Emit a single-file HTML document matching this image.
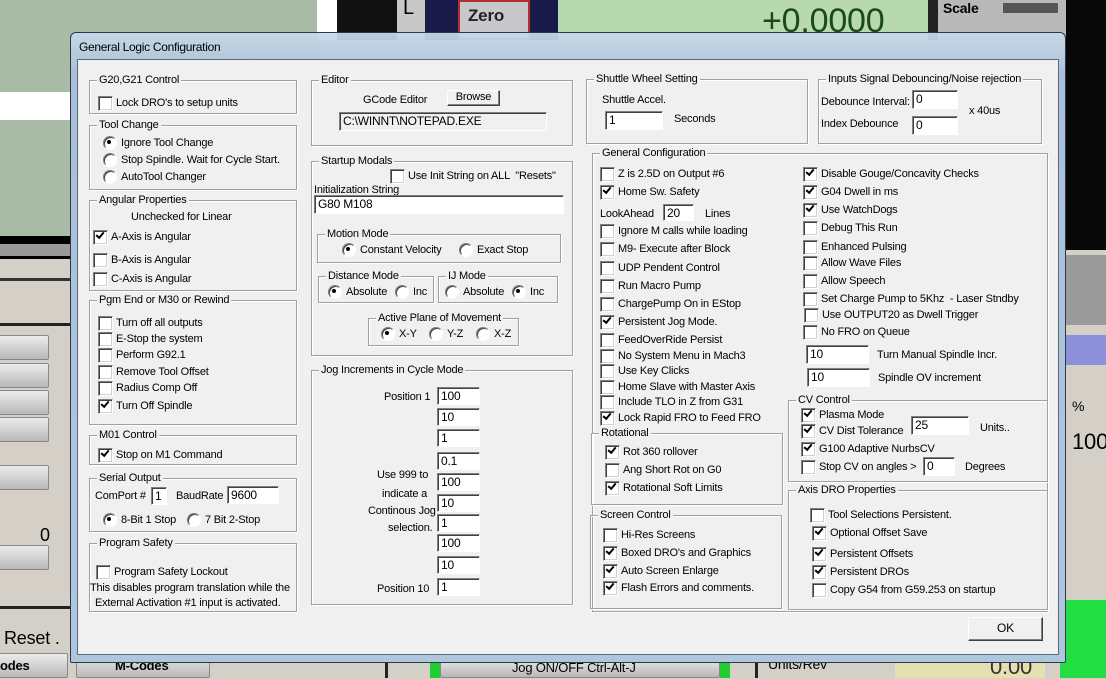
<!DOCTYPE html>
<html><head><meta charset="utf-8"><style>
*{margin:0;padding:0;box-sizing:border-box}
body{width:1106px;height:678px;overflow:hidden;position:relative;background:#d4d0c8;font-family:"Liberation Sans",sans-serif;font-size:11px;color:#000;letter-spacing:-0.2px}
.a{position:absolute}
.t{position:absolute;white-space:nowrap;line-height:14px;margin-top:1px}
.g{position:absolute;border:1px solid #a0a0a0;box-shadow:1px 1px 0 #fff,inset 1px 1px 0 #fff}
.g>span{position:absolute;top:-8px;left:7px;background:#f0f0f0;padding:0 2px;line-height:14px;white-space:nowrap}
.c,.r{position:absolute;padding-left:18px;height:14px;line-height:14px;white-space:nowrap;margin-top:1px}
.c::before{content:"";position:absolute;left:0;top:0;width:13px;height:13px;border:1px solid;border-color:#808080 #fff #fff #808080;box-shadow:inset 1px 1px 0 #404040,inset -1px -1px 0 #d4d0c8;background:#fff}
.c.k::after{content:"";position:absolute;left:3px;top:2px;width:6px;height:3px;border-left:2px solid #000;border-bottom:2px solid #000;transform:rotate(-50deg)}
.r::before{content:"";position:absolute;left:0;top:0;width:12px;height:12px;border-radius:50%;border:1px solid;border-color:#808080 #fff #fff #808080;box-shadow:inset 1px 1px 0 #404040;background:#fff}
.r.k::after{content:"";position:absolute;left:4px;top:4px;width:4px;height:4px;border-radius:50%;background:#000}
.in{position:absolute;background:#fff;border:1px solid;border-color:#808080 #fff #fff #808080;box-shadow:inset 1px 1px 0 #404040;padding:2px 0 0 3px;line-height:13px;white-space:nowrap;font-size:12px}
.btn{position:absolute;background:#f0f0f0;border:1px solid;border-color:#fff #404040 #404040 #fff;box-shadow:inset -1px -1px 0 #808080;text-align:center;white-space:nowrap}
.bb{position:absolute;background:linear-gradient(#ececec,#b8b8b8);border:1px solid #888;border-radius:2px}
</style></head><body>
<div class="a" style="left:0;top:0;width:320px;height:236px;background:#a9bba6"></div>
<div class="a" style="left:0;top:92px;width:72px;height:28px;background:#fff"></div>
<div class="a" style="left:317px;top:0;width:20px;height:40px;background:#fff"></div>
<div class="a" style="left:337px;top:0;width:60px;height:40px;background:#111"></div>
<div class="a" style="left:397px;top:0;width:28px;height:40px;background:#c8c8c8"></div>
<div class="t" style="left:403px;top:0;font-size:20px">L</div>
<div class="a" style="left:425px;top:0;width:35px;height:40px;background:#1a1a4a"></div>
<div class="a" style="left:458px;top:0;width:72px;height:40px;background:#c8c8cc;border:2px solid #b03030"></div>
<div class="t" style="left:468px;top:8px;font-size:17px;font-weight:bold;color:#222">Zero</div>
<div class="a" style="left:530px;top:0;width:28px;height:40px;background:#1a1a4a"></div>
<div class="a" style="left:558px;top:0;width:370px;height:40px;background:#b8d8b0"></div>
<div class="t" style="left:762px;top:2px;font-size:34px;color:#1a4a1a;line-height:36px">+0.0000</div>
<div class="a" style="left:928px;top:0;width:10px;height:40px;background:#222"></div>
<div class="a" style="left:938px;top:0;width:130px;height:40px;background:#b8b8b8"></div>
<div class="t" style="left:943px;top:0;font-size:14px;font-weight:bold">Scale</div>
<div class="a" style="left:1003px;top:3px;width:55px;height:10px;background:#555"></div>
<div class="a" style="left:1066px;top:0;width:40px;height:250px;background:#080808"></div>
<div class="a" style="left:1066px;top:255px;width:40px;height:70px;background:#9a9a9a"></div>
<div class="a" style="left:1066px;top:335px;width:40px;height:30px;background:#8c90d8"></div>
<div class="t" style="left:1072px;top:398px;font-size:14px">%</div>
<div class="t" style="left:1072px;top:428px;font-size:22px;line-height:26px">100</div>
<div class="a" style="left:1060px;top:600px;width:46px;height:78px;background:#22dd44"></div>
<div class="a" style="left:0;top:236px;width:72px;height:8px;background:#000"></div>
<div class="a" style="left:0;top:244px;width:72px;height:12px;background:#999"></div>
<div class="a" style="left:0;top:256px;width:72px;height:3px;background:#000"></div>
<div class="a" style="left:0;top:278px;width:72px;height:3px;background:#333"></div>
<div class="a" style="left:0;top:323px;width:72px;height:3px;background:#222"></div>
<div class="bb" style="left:-4px;top:335px;width:53px;height:25px"></div>
<div class="bb" style="left:-4px;top:363px;width:53px;height:25px"></div>
<div class="bb" style="left:-4px;top:390px;width:53px;height:25px"></div>
<div class="bb" style="left:-4px;top:417px;width:53px;height:25px"></div>
<div class="bb" style="left:-4px;top:465px;width:53px;height:25px"></div>
<div class="t" style="left:40px;top:523px;font-size:18px;line-height:22px">0</div>
<div class="bb" style="left:-4px;top:545px;width:53px;height:25px"></div>
<div class="a" style="left:0;top:606px;width:72px;height:3px;background:#222"></div>
<div class="t" style="left:4px;top:626px;font-size:18px;line-height:22px">Reset .</div>
<div class="bb" style="left:-4px;top:653px;width:72px;height:25px"></div>
<div class="t" style="left:0;top:658px;font-size:13px;font-weight:bold">odes</div>
<div class="bb" style="left:76px;top:653px;width:134px;height:25px"></div>
<div class="t" style="left:115px;top:658px;font-size:13px;font-weight:bold">M-Codes</div>
<div class="a" style="left:385px;top:660px;width:3px;height:18px;background:#222"></div>
<div class="a" style="left:430px;top:660px;width:10px;height:18px;background:#22cc33"></div>
<div class="bb" style="left:440px;top:656px;width:280px;height:22px"></div>
<div class="t" style="left:512px;top:660px;font-size:13px">Jog ON/OFF Ctrl-Alt-J</div>
<div class="a" style="left:720px;top:660px;width:10px;height:18px;background:#22cc33"></div>
<div class="a" style="left:755px;top:660px;width:3px;height:18px;background:#222"></div>
<div class="t" style="left:768px;top:656px;font-size:14px">Units/Rev</div>
<div class="a" style="left:895px;top:662px;width:150px;height:16px;background:#e6e0b0"></div>
<div class="t" style="left:990px;top:654px;font-size:22px;line-height:24px;color:#333">0.00</div>

<div class="a" style="left:70px;top:32px;width:996px;height:631px;border:1px solid #2a3a4a;border-radius:6px 6px 2px 2px;background:linear-gradient(180deg,rgba(200,218,234,.93),rgba(176,200,222,.93) 30px,#a8c0d8 40px,#b0c6dc);"></div>
<div class="t" style="left:79px;top:39px;font-size:12px;letter-spacing:-0.3px">General Logic Configuration</div>
<div class="a" style="left:77px;top:59px;width:982px;height:596px;background:#f0f0f0;border:1px solid #5a6a7a"></div>

<div class="g" style="left:89px;top:80px;width:208px;height:34px"><span>G20,G21 Control</span></div>
<div class="c" style="left:98px;top:95px">Lock DRO's to setup units</div>

<div class="g" style="left:89px;top:125px;width:208px;height:65px"><span>Tool Change</span></div>
<div class="r k" style="left:103px;top:135px">Ignore Tool Change</div>
<div class="r" style="left:103px;top:152px">Stop Spindle. Wait for Cycle Start.</div>
<div class="r" style="left:103px;top:169px">AutoTool Changer</div>

<div class="g" style="left:89px;top:200px;width:208px;height:91px"><span>Angular Properties</span></div>
<div class="t" style="left:131px;top:209px">Unchecked for Linear</div>
<div class="c k" style="left:93px;top:229px">A-Axis is Angular</div>
<div class="c" style="left:93px;top:252px">B-Axis is Angular</div>
<div class="c" style="left:93px;top:271px">C-Axis is Angular</div>

<div class="g" style="left:89px;top:300px;width:208px;height:125px"><span>Pgm End or M30 or Rewind</span></div>
<div class="c" style="left:98px;top:315px">Turn off all outputs</div>
<div class="c" style="left:98px;top:331px">E-Stop the system</div>
<div class="c" style="left:98px;top:347px">Perform G92.1</div>
<div class="c" style="left:98px;top:364px">Remove Tool Offset</div>
<div class="c" style="left:98px;top:380px">Radius Comp Off</div>
<div class="c k" style="left:98px;top:398px">Turn Off Spindle</div>

<div class="g" style="left:89px;top:435px;width:208px;height:30px"><span>M01 Control</span></div>
<div class="c k" style="left:98px;top:447px">Stop on M1 Command</div>

<div class="g" style="left:89px;top:478px;width:208px;height:54px"><span>Serial Output</span></div>
<div class="t" style="left:95px;top:488px">ComPort #</div>
<div class="in" style="left:151px;top:487px;width:16px;height:18px">1</div>
<div class="t" style="left:176px;top:488px">BaudRate</div>
<div class="in" style="left:227px;top:486px;width:52px;height:18px">9600</div>
<div class="r k" style="left:103px;top:512px">8-Bit 1 Stop</div>
<div class="r" style="left:187px;top:512px">7 Bit 2-Stop</div>

<div class="g" style="left:89px;top:543px;width:208px;height:69px"><span>Program Safety</span></div>
<div class="c" style="left:96px;top:564px">Program Safety Lockout</div>
<div class="t" style="left:90px;top:580px">This disables program translation while the</div>
<div class="t" style="left:95px;top:595px">External Activation #1 input is activated.</div>

<div class="g" style="left:311px;top:80px;width:262px;height:66px"><span>Editor</span></div>
<div class="t" style="left:363px;top:92px">GCode Editor</div>
<div class="btn" style="left:447px;top:90px;width:53px;height:16px;line-height:13px">Browse</div>
<div class="in" style="left:339px;top:112px;width:208px;height:19px;background:#f0f0f0">C:\WINNT\NOTEPAD.EXE</div>

<div class="g" style="left:311px;top:161px;width:262px;height:195px"><span>Startup Modals</span></div>
<div class="c" style="left:390px;top:168px">Use Init String on ALL &nbsp;"Resets"</div>
<div class="t" style="left:314px;top:182px">Initialization String</div>
<div class="in" style="left:314px;top:195px;width:250px;height:19px">G80 M108</div>
<div class="g" style="left:317px;top:234px;width:244px;height:29px"><span>Motion Mode</span></div>
<div class="r k" style="left:342px;top:242px">Constant Velocity</div>
<div class="r" style="left:459px;top:242px">Exact Stop</div>
<div class="g" style="left:318px;top:276px;width:116px;height:27px"><span>Distance Mode</span></div>
<div class="r k" style="left:328px;top:284px">Absolute</div>
<div class="r" style="left:395px;top:284px">Inc</div>
<div class="g" style="left:438px;top:276px;width:120px;height:27px"><span>IJ Mode</span></div>
<div class="r" style="left:445px;top:284px">Absolute</div>
<div class="r k" style="left:512px;top:284px">Inc</div>
<div class="g" style="left:368px;top:318px;width:151px;height:28px"><span>Active Plane of Movement</span></div>
<div class="r k" style="left:381px;top:326px">X-Y</div>
<div class="r" style="left:429px;top:326px">Y-Z</div>
<div class="r" style="left:476px;top:326px">X-Z</div>

<div class="g" style="left:311px;top:370px;width:262px;height:235px"><span>Jog Increments in Cycle Mode</span></div>
<div class="t" style="left:384px;top:389px">Position 1</div>
<div class="in" style="left:437px;top:387px;width:43px;height:18px">100</div>
<div class="in" style="left:437px;top:408px;width:43px;height:18px">10</div>
<div class="in" style="left:437px;top:429px;width:43px;height:18px">1</div>
<div class="in" style="left:437px;top:452px;width:43px;height:18px">0.1</div>
<div class="in" style="left:437px;top:473px;width:43px;height:18px">100</div>
<div class="in" style="left:437px;top:494px;width:43px;height:18px">10</div>
<div class="in" style="left:437px;top:514px;width:43px;height:18px">1</div>
<div class="in" style="left:437px;top:534px;width:43px;height:18px">100</div>
<div class="in" style="left:437px;top:556px;width:43px;height:18px">10</div>
<div class="in" style="left:437px;top:578px;width:43px;height:18px">1</div>
<div class="t" style="left:377px;top:467px">Use 999 to</div>
<div class="t" style="left:382px;top:486px">indicate a</div>
<div class="t" style="left:368px;top:503px">Continous Jog</div>
<div class="t" style="left:388px;top:520px">selection.</div>
<div class="t" style="left:377px;top:581px">Position 10</div>

<div class="g" style="left:586px;top:79px;width:222px;height:65px"><span>Shuttle Wheel Setting</span></div>
<div class="t" style="left:602px;top:92px">Shuttle Accel.</div>
<div class="in" style="left:605px;top:111px;width:58px;height:19px">1</div>
<div class="t" style="left:674px;top:111px">Seconds</div>
<div class="g" style="left:818px;top:79px;width:224px;height:65px"><span>Inputs Signal Debouncing/Noise rejection</span></div>
<div class="t" style="left:821px;top:94px">Debounce Interval:</div>
<div class="in" style="left:912px;top:90px;width:46px;height:19px">0</div>
<div class="t" style="left:821px;top:116px">Index Debounce</div>
<div class="in" style="left:912px;top:116px;width:46px;height:19px">0</div>
<div class="t" style="left:969px;top:103px">x 40us</div>

<div class="g" style="left:592px;top:153px;width:456px;height:459px"><span>General Configuration</span></div>
<div class="c" style="left:600px;top:166px">Z is 2.5D on Output #6</div>
<div class="c k" style="left:600px;top:184px">Home Sw. Safety</div>
<div class="t" style="left:600px;top:206px">LookAhead</div>
<div class="in" style="left:663px;top:204px;width:31px;height:17px">20</div>
<div class="t" style="left:705px;top:206px">Lines</div>
<div class="c" style="left:600px;top:223px">Ignore M calls while loading</div>
<div class="c" style="left:600px;top:241px">M9- Execute after Block</div>
<div class="c" style="left:600px;top:260px">UDP Pendent Control</div>
<div class="c" style="left:600px;top:278px">Run Macro Pump</div>
<div class="c" style="left:600px;top:296px">ChargePump On in EStop</div>
<div class="c k" style="left:600px;top:314px">Persistent Jog Mode.</div>
<div class="c" style="left:600px;top:332px">FeedOverRide Persist</div>
<div class="c" style="left:600px;top:348px">No System Menu in Mach3</div>
<div class="c" style="left:600px;top:363px">Use Key Clicks</div>
<div class="c" style="left:600px;top:379px">Home Slave with Master Axis</div>
<div class="c" style="left:600px;top:394px">Include TLO in Z from G31</div>
<div class="c k" style="left:600px;top:410px">Lock Rapid FRO to Feed FRO</div>

<div class="g" style="left:591px;top:433px;width:192px;height:72px"><span>Rotational</span></div>
<div class="c k" style="left:605px;top:444px">Rot 360 rollover</div>
<div class="c" style="left:605px;top:462px">Ang Short Rot on G0</div>
<div class="c k" style="left:605px;top:480px">Rotational Soft Limits</div>

<div class="g" style="left:590px;top:515px;width:192px;height:94px"><span>Screen Control</span></div>
<div class="c" style="left:603px;top:527px">Hi-Res Screens</div>
<div class="c k" style="left:603px;top:545px">Boxed DRO's and Graphics</div>
<div class="c k" style="left:603px;top:563px">Auto Screen Enlarge</div>
<div class="c k" style="left:603px;top:580px">Flash Errors and comments.</div>

<div class="c k" style="left:803px;top:166px">Disable Gouge/Concavity Checks</div>
<div class="c k" style="left:803px;top:184px">G04 Dwell in ms</div>
<div class="c k" style="left:803px;top:202px">Use WatchDogs</div>
<div class="c" style="left:803px;top:220px">Debug This Run</div>
<div class="c" style="left:803px;top:239px">Enhanced Pulsing</div>
<div class="c" style="left:803px;top:255px">Allow Wave Files</div>
<div class="c" style="left:803px;top:273px">Allow Speech</div>
<div class="c" style="left:803px;top:291px">Set Charge Pump to 5Khz &nbsp;- Laser Stndby</div>
<div class="c" style="left:804px;top:307px">Use OUTPUT20 as Dwell Trigger</div>
<div class="c" style="left:803px;top:324px">No FRO on Queue</div>
<div class="in" style="left:806px;top:345px;width:63px;height:19px">10</div>
<div class="t" style="left:877px;top:347px">Turn Manual Spindle Incr.</div>
<div class="in" style="left:807px;top:368px;width:63px;height:19px">10</div>
<div class="t" style="left:878px;top:370px">Spindle OV increment</div>

<div class="g" style="left:788px;top:400px;width:260px;height:82px"><span>CV Control</span></div>
<div class="c k" style="left:801px;top:407px">Plasma Mode</div>
<div class="c k" style="left:801px;top:423px">CV Dist Tolerance</div>
<div class="in" style="left:911px;top:416px;width:58px;height:19px">25</div>
<div class="t" style="left:980px;top:420px">Units..</div>
<div class="c k" style="left:801px;top:441px">G100 Adaptive NurbsCV</div>
<div class="c" style="left:801px;top:459px">Stop CV on angles &gt;</div>
<div class="in" style="left:923px;top:457px;width:32px;height:19px">0</div>
<div class="t" style="left:965px;top:459px">Degrees</div>

<div class="g" style="left:788px;top:490px;width:260px;height:120px"><span>Axis DRO Properties</span></div>
<div class="c" style="left:810px;top:507px">Tool Selections Persistent.</div>
<div class="c k" style="left:812px;top:525px">Optional Offset Save</div>
<div class="c k" style="left:812px;top:546px">Persistent Offsets</div>
<div class="c k" style="left:812px;top:564px">Persistent DROs</div>
<div class="c" style="left:812px;top:582px">Copy G54 from G59.253 on startup</div>

<div class="btn" style="left:968px;top:617px;width:75px;height:24px;line-height:21px;font-size:12px">OK</div>
</body></html>
